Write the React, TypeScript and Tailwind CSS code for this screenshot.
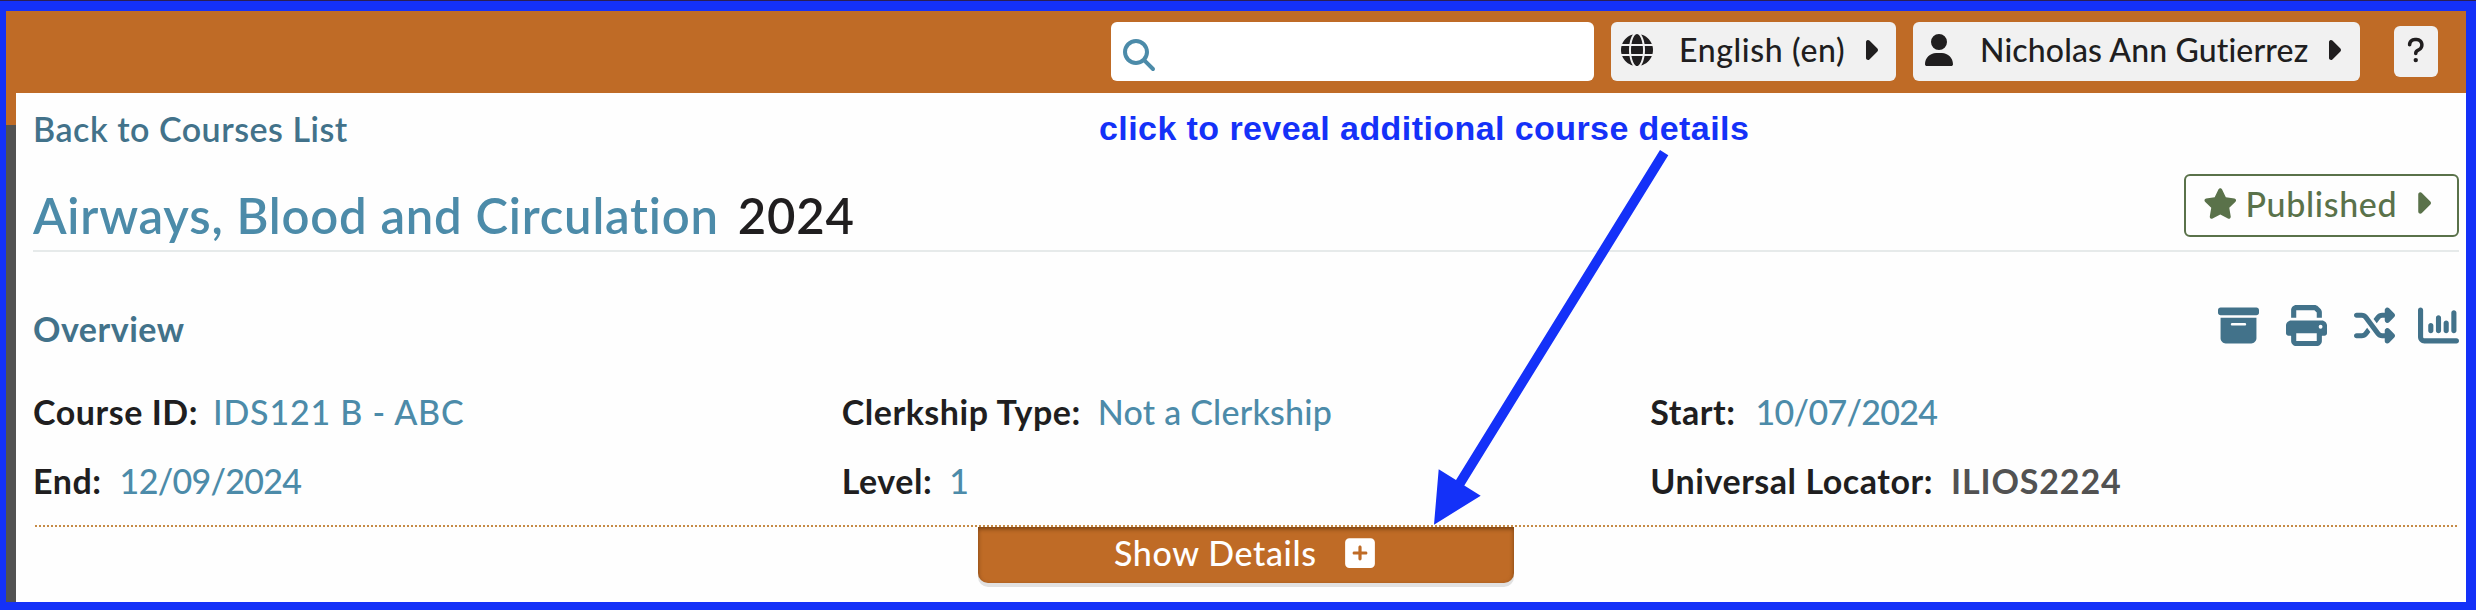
import React from "react";
import {
  FaBoxArchive,
  FaCaretRight,
  FaChartColumn,
  FaGlobe,
  FaMagnifyingGlass,
  FaPrint,
  FaQuestion,
  FaShuffle,
  FaSquarePlus,
  FaStar,
  FaUser,
} from "react-icons/fa6";

function Header() {
  return (
    <header className="flex h-[82px] shrink-0 items-start justify-end bg-[#bf6b26] pt-[11px] pr-7 text-[32px] leading-10 font-medium text-[#201e1f]">
      <div className="mr-[17px] flex h-[59px] w-[483px] items-center rounded-md bg-white pt-[7px] pl-3">
        <FaMagnifyingGlass className="h-8 w-8 text-[#4c8ba9]" />
      </div>
      <button className="mr-[17px] flex h-[59px] w-[285px] items-center rounded-md bg-[#f1f1f1] pb-[3px] pl-[10px]">
        <FaGlobe className="h-8 w-8 shrink-0" />
        <span className="ml-[26px] whitespace-nowrap tracking-[0.64px]">English (en)</span>
        <FaCaretRight className="ml-[17px] h-8 w-4 shrink-0" />
      </button>
      <button className="mr-[34px] flex h-[59px] w-[447px] items-center rounded-md bg-[#f1f1f1] pb-[3px] pl-3">
        <FaUser className="h-8 w-7 shrink-0" />
        <span className="ml-[27px] whitespace-nowrap tracking-[0.14px]">Nicholas Ann Gutierrez</span>
        <FaCaretRight className="ml-[17px] h-8 w-4 shrink-0" />
      </button>
      <button className="mt-1 flex h-[51px] w-11 items-center justify-center rounded-md bg-[#f1f1f1] pb-[3px]">
        <FaQuestion className="h-7 w-[17.5px]" />
      </button>
    </header>
  );
}

function Field({ label, children }: { label: string; children: React.ReactNode }) {
  return (
    <div className="flex items-baseline whitespace-nowrap">
      <span className="font-bold tracking-[0.55px] text-[#201e1f]">{label}</span>
      <span className="ml-[17px] font-medium text-[#4c8ba9]">{children}</span>
    </div>
  );
}

function Overview() {
  return (
    <section>
      <div className="flex h-[94px] items-start justify-between pt-[53px]">
        <h3 className="mt-1 font-bold tracking-[0.5px] text-[#42728a]">Overview</h3>
        <div className="flex text-[#42728a]">
          <FaBoxArchive className="mr-[27px] h-[41px] w-[41px]" />
          <FaPrint className="mr-[27px] h-[41px] w-[41px]" />
          <FaShuffle className="mr-[23px] h-[41px] w-[41px]" />
          <FaChartColumn className="h-[41px] w-[41px]" />
        </div>
      </div>
      <div className="mt-[46px] grid h-[133px] grid-cols-3 grid-rows-[69px_64px]">
        <Field label="Course ID:"><span className="-ml-[2px] tracking-[0.78px]">IDS121 B - ABC</span></Field>
        <Field label="Clerkship Type:"><span className="tracking-[0.23px]">Not a Clerkship</span></Field>
        <Field label="Start:"><span className="ml-[3px] tracking-[-0.69px]">10/07/2024</span></Field>
        <Field label="End:"><span className="ml-px tracking-[-0.7px]">12/09/2024</span></Field>
        <Field label="Level:">1</Field>
        <Field label="Universal Locator:"><span className="ml-px font-bold tracking-[0.86px] text-[#525252]">ILIOS2224</span></Field>
      </div>
    </section>
  );
}

function DetailsToggle() {
  return (
    <div>
      <div className="mx-[2px] h-[2px] bg-[repeating-linear-gradient(90deg,#c68b46_0_2px,#fefefe_2px_4px)]" />
      <button className="ml-[945px] flex h-14 w-[536px] items-center rounded-b-[10px] bg-[#bf6b26] pb-1 pl-[136px] text-white shadow-[0_4px_0_#e1e1e1,inset_0_2px_4px_rgba(60,30,0,0.55)]">
        <span className="font-medium whitespace-nowrap tracking-[0.63px]">Show Details</span>
        <FaSquarePlus className="ml-7 h-[34px] w-[30px]" />
      </button>
    </div>
  );
}

function CoursePage() {
  return (
    <main className="flex-1 bg-[#fefefe] pr-[7px] pl-[17px] text-[34px] leading-10">
      <div className="h-[55px] pt-4">
        <a className="block font-semibold tracking-[0.52px] text-[#42728a]">Back to Courses List</a>
      </div>
      <div className="flex h-[104px] items-start justify-between border-b-2 border-[#e6eaea]">
        <h2 className="mt-[37px] flex text-[49px] leading-[60px] font-semibold whitespace-nowrap">
          <span className="tracking-[0.79px] text-[#4c8ba9]">Airways, Blood and Circulation</span>
          <span className="ml-[19px] tracking-[0.81px] text-[#201e1f]">2024</span>
        </h2>
        <button className="mt-[26px] flex h-[63px] w-[275px] items-center rounded-md border-2 border-[#5a724a] pb-[5px] pl-[17px] font-medium text-[#5a724a]">
          <FaStar className="h-[31px] w-[34.5px] shrink-0" />
          <span className="mt-px ml-2 tracking-[0.66px]">Published</span>
          <FaCaretRight className="ml-[17px] h-[34px] w-[17px] shrink-0" />
        </button>
      </div>
      <Overview />
      <DetailsToggle />
    </main>
  );
}

function Annotation() {
  return (
    <>
      <p className="absolute top-[108px] left-[1099px] font-['Liberation_Sans',sans-serif] text-[34px] leading-10 font-bold tracking-[0.42px] whitespace-nowrap text-[#1431f8]">
        click to reveal additional course details
      </p>
      <svg className="absolute top-[140px] left-[1420px]" width="260" height="390" viewBox="1420 140 260 390" fill="#1431f8">
        <path d="M1660 150L1668.3 155.3L1464.3 485.4L1480.7 495.7L1434 524.7L1438.7 469.3L1456 480Z" />
      </svg>
    </>
  );
}

export default function App() {
  return (
    <div className="relative flex h-[610px] w-[2476px] flex-col bg-[#1431f8] font-['Lato','Open_Sans',sans-serif]">
      <div className="h-px shrink-0 bg-[#2a1f55]" />
      <div className="mt-[10px] mr-[10px] mb-2 ml-[6px] flex min-h-0 flex-1 flex-col">
        <Header />
        <div className="flex min-h-0 flex-1">
          <aside className="w-[10px] bg-[#525252]">
            <div className="h-8 bg-[#bf6b26]" />
          </aside>
          <CoursePage />
        </div>
      </div>
      <Annotation />
    </div>
  );
}
